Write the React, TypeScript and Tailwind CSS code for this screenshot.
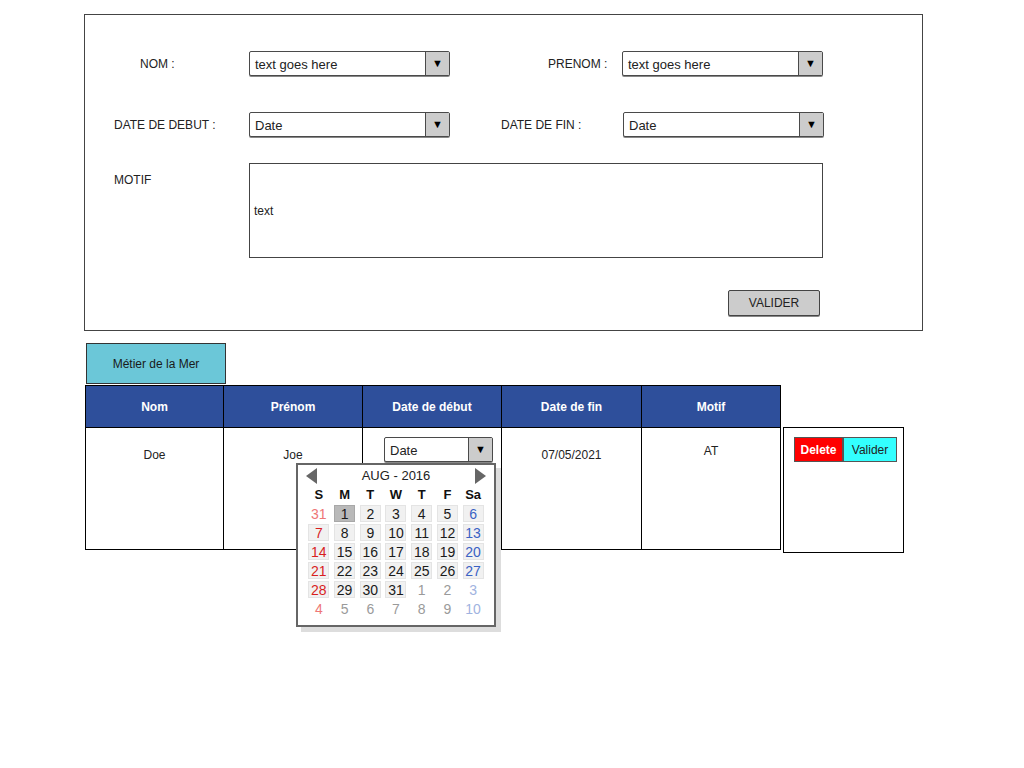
import React from 'react'

const sketch = { fontFamily: '"Liberation Sans", Arial, sans-serif' }
const arial = { fontFamily: '"Liberation Sans", Arial, sans-serif' }

function Combo({ text, width }: { text: string; width: string }) {
  return (
    <div
      className={`flex h-[25px] ${width} items-stretch rounded-[2px] border border-[#4a4a4a] bg-white shadow-[0_1px_0_#888]`}
    >
      <div className="flex flex-1 items-center pl-[5px] pt-[2px] text-[13px] text-[#222]">{text}</div>
      <div className="flex w-[24px] items-center justify-center border-l border-[#4a4a4a] bg-[#cccccc] text-[11px] text-black">
        ▼
      </div>
    </div>
  )
}

type Day = { d: number; kind: 'sun' | 'sat' | 'day'; other?: boolean; sel?: boolean }

const weeks: Day[][] = [
  [31, 1, 2, 3, 4, 5, 6],
  [7, 8, 9, 10, 11, 12, 13],
  [14, 15, 16, 17, 18, 19, 20],
  [21, 22, 23, 24, 25, 26, 27],
  [28, 29, 30, 31, 1, 2, 3],
  [4, 5, 6, 7, 8, 9, 10],
].map((row, r) =>
  row.map((d, c) => ({
    d,
    kind: c === 0 ? 'sun' : c === 6 ? 'sat' : 'day',
    other: (r === 0 && c === 0) || (r === 4 && c >= 4) || r === 5,
    sel: r === 0 && c === 1,
  }))
)

function dayClass(day: Day) {
  if (day.other) {
    if (day.kind === 'sun') return 'text-[#ee7777]'
    if (day.kind === 'sat') return 'text-[#9fb3e0]'
    return 'text-[#9a9a9a]'
  }
  const box = day.sel
    ? 'bg-[#b9b9b9] border border-[#a8a8a8]'
    : 'bg-[#f1f1f1] border border-[#e4e4e4]'
  if (day.kind === 'sun') return `${box} text-[#d81e1e]`
  if (day.kind === 'sat') return `${box} text-[#3a62c4]`
  return `${box} text-[#1a1a1a]`
}

function Calendar() {
  return (
    <div
      className="absolute left-[-67px] top-[35px] z-10 w-[200px] border-2 border-[#666666] bg-white px-[8px] pt-px pb-[7px] shadow-[5px_5px_0_#dddddd]"
      style={arial}
    >
      <div className="flex h-[19px] items-center justify-between">
        <svg width="11" height="16" viewBox="0 0 11 16">
          <polygon points="11,0 11,16 0,8" fill="#666666" />
        </svg>
        <span className="text-[13px] text-[#222]">AUG - 2016</span>
        <svg width="11" height="16" viewBox="0 0 11 16">
          <polygon points="0,0 0,16 11,8" fill="#666666" />
        </svg>
      </div>
      <div className="grid grid-cols-7 text-center text-[13px] font-bold text-[#111]">
        {['S', 'M', 'T', 'W', 'T', 'F', 'Sa'].map((h, i) => (
          <div key={i} className="flex h-[19px] items-center justify-center">
            {h}
          </div>
        ))}
      </div>
      {weeks.map((row, r) => (
        <div key={r} className="grid grid-cols-7 text-[14px]">
          {row.map((day, c) => (
            <div key={c} className="flex h-[19px] items-center justify-center">
              <div className={`flex h-[17px] w-[21px] items-center justify-center leading-none ${dayClass(day)}`}>
                {day.d}
              </div>
            </div>
          ))}
        </div>
      ))}
    </div>
  )
}

const headers = [
  { label: 'Nom', w: 'w-[139px]' },
  { label: 'Prénom', w: 'w-[140px]' },
  { label: 'Date de début', w: 'w-[140px]' },
  { label: 'Date de fin', w: 'w-[141px]' },
  { label: 'Motif', w: 'w-[140px]' },
]

export default function App() {
  return (
    <div className="h-[768px] w-[1024px] bg-white pl-[84px] pt-[14px] text-[#222]" style={sketch}>
      {/* formulaire */}
      <div className="flex h-[317px] w-[839px] flex-col border border-[#444] pt-[36px]">
        <div className="flex h-[25px] items-center">
          <div className="w-[164px] pl-[55px] text-[12px]">NOM :</div>
          <Combo text="text goes here" width="w-[201px]" />
          <div className="w-[172px] pl-[98px] text-[12px]">PRENOM :</div>
          <Combo text="text goes here" width="w-[201px]" />
        </div>
        <div className="mt-[36px] flex h-[25px] items-center">
          <div className="w-[164px] pl-[29px] text-[12px]">DATE DE DEBUT :</div>
          <Combo text="Date" width="w-[201px]" />
          <div className="w-[173px] pl-[51px] text-[12px]">DATE DE FIN :</div>
          <Combo text="Date" width="w-[201px]" />
        </div>
        <div className="mt-[26px] flex">
          <div className="w-[164px] pl-[29px] pt-[8px] text-[12px]">MOTIF</div>
          <div className="flex h-[95px] w-[574px] items-center border border-[#444] pl-[4px] text-[12px]">
            text
          </div>
        </div>
        <div className="mt-[32px] flex">
          <div className="ml-[643px] flex h-[26px] w-[92px] items-center justify-center rounded-[2px] border border-[#444] bg-[#cccccc] text-[12px] shadow-[0_1px_0_#888]">
            VALIDER
          </div>
        </div>
      </div>

      {/* onglet */}
      <div className="ml-[2px] mt-[12px] flex h-[41px] w-[140px] items-center justify-center border border-[#333] bg-[#6bc7d8] text-[12px] text-[#1a1a1a]">
        Métier de la Mer
      </div>

      {/* tableau */}
      <div className="ml-px mt-[1px] flex items-start">
        {headers.map((h, i) => (
          <div key={h.label} className={`flex ${h.w} flex-col ${i > 0 ? '-ml-px' : ''}`}>
            <div className="flex h-[43px] items-center justify-center border border-black bg-[#2e4f9b] text-[12px] font-bold text-white">
              {h.label}
            </div>
            <div className="relative -mt-px flex h-[123px] justify-center border border-black bg-white pt-[18px] text-[12px]">
              {i === 0 && <span>Doe</span>}
              {i === 1 && <span>Joe</span>}
              {i === 2 && (
                <>
                  <div className="absolute left-[21px] top-[9px]">
                    <Combo text="Date" width="w-[109px]" />
                  </div>
                  <Calendar />
                </>
              )}
              {i === 3 && <span>07/05/2021</span>}
              {i === 4 && <span className="-mt-[4px]">AT</span>}
            </div>
          </div>
        ))}
        <div className="ml-[2px] mt-[42px] flex h-[126px] w-[121px] items-start border border-black bg-white pl-[10px] pt-[9px]">
          <div className="flex h-[25px] w-[49px] items-center justify-center border border-[#555] bg-[#ff0000] text-[12px] font-bold text-white">
            Delete
          </div>
          <div className="flex h-[25px] w-[54px] items-center justify-center border border-[#555] bg-[#33ffff] text-[12px] text-[#222]">
            Valider
          </div>
        </div>
      </div>
    </div>
  )
}
